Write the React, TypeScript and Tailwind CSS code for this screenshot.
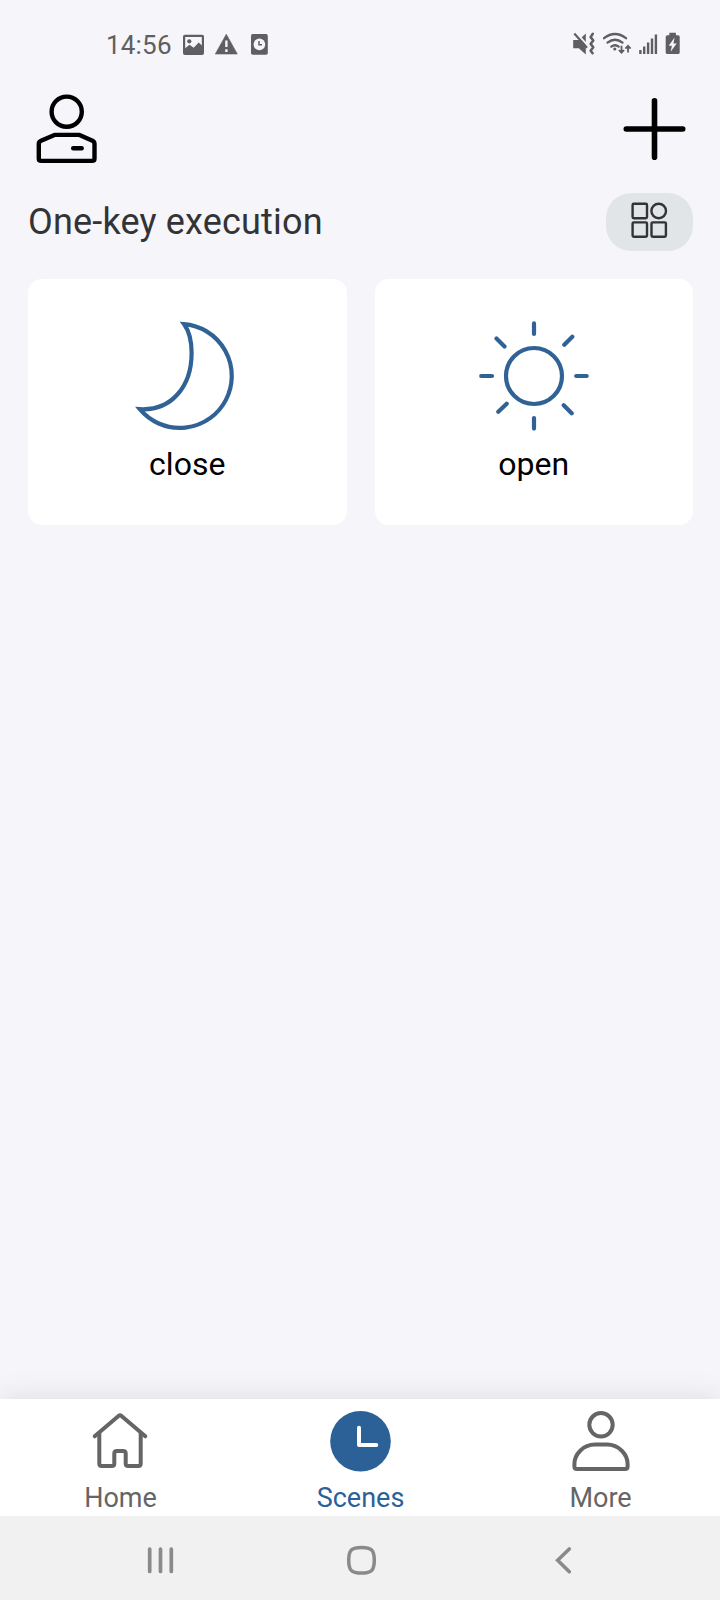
import type { ReactNode } from "react";

function StatusBar() {
  return (
    <div className="flex h-[88px] shrink-0 items-start justify-between pt-[30px] pr-10 pl-[106px] text-[#5f5f62]">
      <div className="flex h-[30px] items-start">
        <span className="w-[77px] text-[26px] leading-[31px] tracking-[0.2px]">14:56</span>
        <svg className="mt-1 h-[22px] w-[22px]" viewBox="183 34 22 22" fill="none">
          <rect x="184.1" y="35.8" width="18.8" height="18" rx="0.8" stroke="currentColor" strokeWidth="2.2" />
          <circle cx="189.3" cy="41.3" r="2.1" fill="currentColor" />
          <path d="M184.5 51V48.8l5-4 4.2 3 5-5.2 4 3.6V51Z" fill="currentColor" />
          <path d="M184.5 50h18v3.5h-18z" fill="currentColor" />
        </svg>
        <svg className="mt-[3px] ml-2.5 h-6 w-6" viewBox="215 33 24 24">
          <path d="M226.3 34.2 237.3 54H215.3Z" fill="currentColor" stroke="currentColor" strokeWidth="0.6" strokeLinejoin="round" />
          <path d="M226.4 40.5v6.6M226.4 49.2v2.8" stroke="#f5f5fa" strokeWidth="2.4" />
        </svg>
        <svg className="mt-[3px] ml-3 h-6 w-[18px]" viewBox="251 33 18 24" fill="none">
          <rect x="251" y="34" width="16.8" height="20.8" rx="1.8" fill="currentColor" />
          <circle cx="259.4" cy="44.4" r="5.8" fill="#f5f5fa" />
          <path d="M259 41v3.8h3" stroke="currentColor" strokeWidth="1.5" />
        </svg>
      </div>
      <div className="flex">
        <svg className="h-7 w-7" viewBox="572 30 28 28" fill="none">
          <path d="M573.2 40h5.6l7-6.5V54.5l-7-6.3h-5.6Z" fill="currentColor" />
          <path d="M575 31.5 588 46" stroke="#f5f5fa" strokeWidth="2" />
          <path d="M574.3 33.5 587 47.7" stroke="currentColor" strokeWidth="2.2" />
          <path
            d="M592.8 33.8l-2.2 3.3 2.7 3.4-2.7 3.4 2.7 3.4-2.7 3.4 2 2.6"
            stroke="currentColor"
            strokeWidth="2.5"
            strokeLinecap="round"
            strokeLinejoin="round"
          />
        </svg>
        <svg className="ml-[3px] h-7 w-[30px]" viewBox="603 30 30 28" fill="none" stroke="currentColor">
          <path d="M604 38.2q11-8.4 22 0M607.5 42.6q7.5-5.8 15 0M611.3 46.6q3.8-2.7 7.4 0" strokeWidth="2.3" strokeLinecap="round" />
          <circle cx="614.8" cy="49" r="1.6" fill="currentColor" stroke="none" />
          <path d="M621.5 45.8v6.5M618.9 50l2.6 2.7 2.6-2.7M628 52.5V46M625.4 48.6l2.6-2.7 2.6 2.7" strokeWidth="1.8" />
        </svg>
        <svg className="ml-[5px] h-7 w-5" viewBox="638 30 20 28" stroke="currentColor" strokeWidth="2.4">
          <path d="M640.4 50v4M644.2 46.6V54M648.1 42.4V54M652 38.4V54M655.9 34.4V54" />
        </svg>
        <svg className="ml-1.5 h-7 w-4" viewBox="664 30 16 28">
          <path d="M669.3 32.7h6.6v2.5h2.2q1.6 0 1.6 1.6v15.6q0 1.6-1.6 1.6h-10.8q-1.6 0-1.6-1.6V36.8q0-1.6 1.6-1.6h2Z" fill="currentColor" />
          <path d="M674.6 37.5 668.7 45.8h3.2l-1.3 6 6.1-8.2h-3.3Z" fill="#f5f5fa" />
        </svg>
      </div>
    </div>
  );
}

function SceneCard({ label, children }: { label: string; children: ReactNode }) {
  return (
    <button className="flex h-[246px] flex-1 flex-col items-center rounded-[14px] bg-white pt-[37px]">
      <svg
        className="h-[120px] w-[120px] text-[#316295]"
        viewBox="0 0 120 120"
        fill="none"
        stroke="currentColor"
        strokeWidth="4.2"
        strokeMiterlimit="10"
      >
        {children}
      </svg>
      <span className="mt-[9px] text-[32px] leading-[38px] text-black">{label}</span>
    </button>
  );
}

function Tab({ label, active = false, children }: { label: string; active?: boolean; children: ReactNode }) {
  return (
    <button className={`flex flex-1 flex-col items-center pt-2 ${active ? "text-[#2b6197]" : "text-[#656565]"}`}>
      <svg
        className="h-[68px] w-[68px] shrink-0"
        viewBox="0 0 68 68"
        fill="none"
        stroke="currentColor"
        strokeWidth="4"
        strokeLinecap="round"
        strokeLinejoin="round"
      >
        {children}
      </svg>
      <span className="mt-[7px] pl-px text-[27px] leading-8">{label}</span>
    </button>
  );
}

export default function App() {
  return (
    <div className="flex h-[1600px] w-[720px] flex-col overflow-hidden bg-[#f5f5fa] font-['Roboto',sans-serif]">
      <StatusBar />
      <header className="flex h-[84px] shrink-0 items-start justify-between px-[31px]">
        <svg className="h-20 w-[72px]" viewBox="31 88 72 80" fill="none" stroke="#000" strokeWidth="4.4" strokeLinecap="round" strokeLinejoin="round">
          <circle cx="66.7" cy="111.7" r="15.1" />
          <path d="M54.5 134.9H79.5L92.5 140.8Q94.5 141.8 94.5 144V158.5Q94.5 160.9 92 160.9H41.3Q38.8 160.9 38.8 158.5V144Q38.8 141.8 41 140.8Z" />
          <path d="M73.2 148.2H81.7" />
        </svg>
        <svg className="h-20 w-[70px]" viewBox="619 88 70 80" stroke="#000" strokeWidth="5.6" strokeLinecap="round">
          <path d="M626.3 129H682.7M654.5 100.8V157.2" />
        </svg>
      </header>
      <main className="flex-1 pt-[21px] pr-[27px] pl-7">
        <div className="flex h-[58px] items-center justify-between">
          <h1 className="text-[36px] leading-[42px] tracking-[0.18px] text-[#333336]">One-key execution</h1>
          <button className="flex h-[58px] w-[87px] items-center justify-center rounded-[25px] bg-[#e2e5e8]">
            <svg className="h-10 w-10" viewBox="630 202 40 40" fill="none" stroke="#333336" strokeWidth="2.4">
              <rect x="632.6" y="203.8" width="14.4" height="14.4" rx="1.2" />
              <circle cx="658.7" cy="211" r="7.3" />
              <rect x="632.6" y="222.4" width="14.4" height="14.4" rx="1.2" />
              <rect x="651.5" y="222.4" width="14.4" height="14.4" rx="1.2" />
            </svg>
          </button>
        </div>
        <section className="mt-7 flex gap-7">
          <SceneCard label="close">
            <path d="M57 8.1A52 52 0 1 1 12.8 93.2C44 95 64.6 71 64.6 37C64.6 25 62 15 57 8.1Z" />
          </SceneCard>
          <SceneCard label="open">
            <circle cx="60" cy="60" r="28" />
            <path
              strokeLinecap="round"
              d="M60 7.4V18M60 102V112.6M7.2 60H18M102.2 60H112.7M22.5 22.5L30.5 30.5M98.3 20.7L90.3 28.7M32.7 87.7L24.3 95.7M89.7 89.3L97.7 97.3"
            />
          </SceneCard>
        </section>
      </main>
      <nav className="flex h-[117px] shrink-0 bg-white shadow-[0_0_28px_rgba(40,40,50,0.12)]">
        <Tab label="Home">
          <path d="M8.7 29.3 32.5 9Q34 7.7 35.5 9L59.3 29.3" />
          <path d="M13.3 26V56.5Q13.3 59 15.8 59H25.8Q28.3 59 28.3 56.5V46.5Q28.3 44 30.8 44H37.2Q39.7 44 39.7 46.5V56.5Q39.7 59 42.2 59H52.2Q54.7 59 54.7 56.5V26" />
        </Tab>
        <Tab label="Scenes" active>
          <circle cx="34.5" cy="34.3" r="30.3" fill="currentColor" stroke="none" />
          <path d="M33 20.7V38H50.3" stroke="#fff" />
        </Tab>
        <Tab label="More">
          <circle cx="35" cy="17.8" r="11.7" />
          <path d="M29 37.6H41C53 37.6 61.6 47.5 61.6 57V59.5Q61.6 62 59 62H11Q8.4 62 8.4 59.5V57C8.4 47.5 17 37.6 29 37.6Z" />
        </Tab>
      </nav>
      <footer className="flex h-[84px] shrink-0 items-center justify-between bg-[#f1f1f1] pr-[137px] pl-[140px] text-[#8a8a8a]">
        <svg className="h-10 w-10" viewBox="140 1538 40 40" stroke="currentColor" strokeWidth="3.7" strokeLinecap="round">
          <path d="M149.7 1549.2V1571.5M160.5 1549.2V1571.5M171.3 1549.2V1571.5" />
        </svg>
        <svg className="h-10 w-10" viewBox="342 1538 40 40" fill="none" stroke="currentColor" strokeWidth="3.5">
          <path d="M361.5 1547.4C371.5 1547.4 374.3 1550 374.3 1560.2S371.5 1573 361.5 1573 348.7 1570.4 348.7 1560.2 351.5 1547.4 361.5 1547.4Z" />
        </svg>
        <svg className="h-10 w-10" viewBox="543 1538 40 40" fill="none" stroke="currentColor" strokeWidth="3.6" strokeLinecap="round">
          <path d="M569.3 1549 557.7 1560.3 569.3 1571.7" />
        </svg>
      </footer>
    </div>
  );
}
